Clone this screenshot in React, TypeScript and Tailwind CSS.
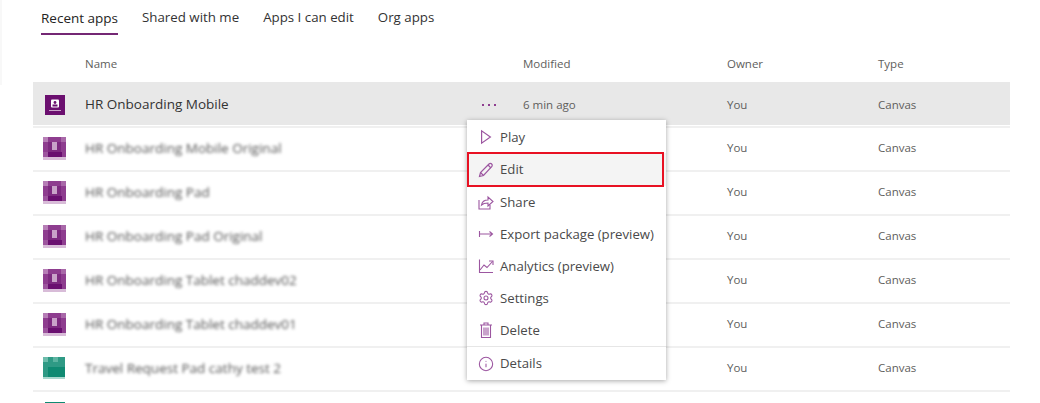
import { Info, Settings } from "lucide-react";
import React from "react";

const font = "font-['Open_Sans','Noto_Sans',sans-serif]";
const iconColor = "#9c56a0";

const tabs = ["Recent apps", "Shared with me", "Apps I can edit", "Org apps"];

const rows = [
  { name: "HR Onboarding Mobile Original", tone: "purple" },
  { name: "HR Onboarding Pad", tone: "purple" },
  { name: "HR Onboarding Pad Original", tone: "purple" },
  { name: "HR Onboarding Tablet chaddev02", tone: "purple" },
  { name: "HR Onboarding Tablet chaddev01", tone: "purple" },
  { name: "Travel Request Pad cathy test 2", tone: "green" },
];

const PurpleBlock = () => (
  <svg width="23" height="23" viewBox="0 0 23 23" shapeRendering="crispEdges" className="shrink-0">
    <rect width="23" height="23" fill="#8e3d8f" />
    <rect width="5" height="5" fill="#b67eb6" />
    <rect x="18" width="5" height="5" fill="#a868a8" />
    <rect y="15" width="5" height="5" fill="#9d559e" />
    <rect x="5" y="5" width="13" height="10" fill="#7d2a80" />
    <rect x="9" y="5" width="5" height="8" fill="#c9a3c9" />
    <rect x="5" y="15" width="14" height="5" fill="#6a0f70" />
    <rect y="20" width="23" height="3" fill="#d8bcd8" />
  </svg>
);

const GreenBlock = () => (
  <svg width="22" height="22" viewBox="0 0 22 22" shapeRendering="crispEdges" className="shrink-0">
    <rect width="22" height="22" fill="#2f9a85" />
    <rect width="5" height="5" fill="#6cbcab" />
    <rect x="10" width="5" height="5" fill="#5cb4a1" />
    <rect x="5" y="10" width="17" height="10" fill="#0f8a72" />
    <rect y="20" width="22" height="2" fill="#a9d8ce" />
  </svg>
);

const PlayIcon = () => (
  <svg width="16" height="16" viewBox="0 0 16 16" fill="none" stroke={iconColor} strokeWidth="1.2">
    <path d="M3.600 1.800v12.400L12.400 8z" />
  </svg>
);

const EditIcon = () => (
  <svg width="16" height="16" viewBox="0 0 16 16" fill="none" stroke={iconColor} strokeWidth="1.2">
    <path d="M1.500 14.500l1-4L11 2c.8-.8 2-.8 2.700 0 .7.700.7 1.900 0 2.600L5.500 13.500z" />
    <path d="M2.500 10.500l3 3M10 3l3 3" />
  </svg>
);

const ShareIcon = () => (
  <svg width="16" height="16" viewBox="0 0 16 16" fill="none" stroke={iconColor} strokeWidth="1.1">
    <path d="M1 6v9h11v-4" />
    <path d="M3.500 11c.5-3 3-5 6.500-5V3l5 4.500-5 4.500V9c-2.500 0-5 .5-6.500 2z" />
  </svg>
);

const ExportIcon = () => (
  <svg width="16" height="16" viewBox="0 0 16 16" fill="none" stroke={iconColor} strokeWidth="1.1">
    <path d="M1.500 5v6M1.500 8h13M11.500 5.500L14.500 8l-3 2.500" />
  </svg>
);

const ChartIcon = () => (
  <svg width="16" height="16" viewBox="0 0 16 16" fill="none" stroke={iconColor} strokeWidth="1.1">
    <path d="M1.500 1.500v13h13.500" />
    <path d="M2 12l4-5 3 2.500L14.500 3.500" />
    <path d="M11 3h4v4" />
  </svg>
);

const SettingsIcon = () => <Settings width={16} height={16} strokeWidth={1.6} color={iconColor} />;

const TrashIcon = () => (
  <svg width="16" height="16" viewBox="0 0 16 16" fill="none" stroke={iconColor} strokeWidth="1.1">
    <path d="M2 3h12M6 3V1h4v2" />
    <path d="M3.500 3v12.500h9V3" />
    <path d="M6 5.500v8M8 5.500v8M10 5.500v8" />
  </svg>
);

const menu = [
  { label: "Play", icon: PlayIcon, h: "h-8" },
  { label: "Edit", icon: EditIcon, h: "h-[33px] bg-[#f4f4f4]" },
  { label: "Share", icon: ShareIcon, h: "h-8" },
  { label: "Export package (preview)", icon: ExportIcon, h: "h-8" },
  { label: "Analytics (preview)", icon: ChartIcon, h: "h-8" },
  { label: "Settings", icon: SettingsIcon, h: "h-8" },
  { label: "Delete", icon: TrashIcon, h: "h-8" },
];

const Row = ({ name, tone }: { name: string; tone: string }) => (
  <div className="h-[44px] flex items-center pb-[2px] border-b-2 border-[#f0f0f0] text-[11.5px] text-[#605e5c]">
    <div className="w-[52px] pl-[10px] flex items-center">
      {tone === "purple" ? <PurpleBlock /> : <GreenBlock />}
    </div>
    <div className="w-[438px] text-[13.5px] text-[#555] blur-[1.4px]">{name}</div>
    <div className="w-[204px]"></div>
    <div className="w-[151px]">You</div>
    <div>Canvas</div>
  </div>
);

export default function App() {
  return (
    <div className={`relative w-[1040px] h-[403px] overflow-hidden bg-white ${font}`}>
      <div className="absolute left-0 top-0 w-[2px] h-[85px] bg-[#f8f8f8]"></div>

      <div className="flex gap-6 pl-[41px] h-[35px] text-[#333] text-[13.3px]">
        {tabs.map((t, i) => (
          <div key={t} className={`h-[35px] pt-[8px] ${i === 0 ? "border-b-2 border-[#742774] font-medium text-[13.5px] text-[#252423]" : ""}`}>
            {t}
          </div>
        ))}
      </div>

      <div className="mx-[33px] w-[977px]">
        <div className="h-[47px] flex items-center text-[11.5px] text-[#605e5c] pt-[10px]">
          <div className="w-[52px]"></div>
          <div className="w-[438px]">Name</div>
          <div className="w-[204px]">Modified</div>
          <div className="w-[151px]">Owner</div>
          <div>Type</div>
        </div>

        <div className="h-[43px] flex items-center bg-[#e8e8e8] text-[11.5px] text-[#605e5c] pt-[2px]">
          <div className="w-[52px] pl-[12px]">
            <svg width="20" height="20" viewBox="0 0 20 20" className="block">
              <rect width="20" height="20" fill="#6b0f6f" />
              <rect x="6" y="4.5" width="8" height="8" rx="1" fill="#fff" />
              <circle cx="10" cy="7.5" r="1.4" fill="#6b0f6f" />
              <rect x="7.5" y="9.5" width="5" height="2" fill="#6b0f6f" />
              <rect x="4" y="15" width="12" height="1" fill="#c9a3c9" />
            </svg>
          </div>
          <div className="w-[380px] text-[13.5px] text-[#333]">HR Onboarding Mobile</div>
          <div className="w-[58px] flex gap-[4px] pl-[17px]">
            <span className="size-[2px] bg-[#8e3d8f]"></span>
            <span className="size-[2px] bg-[#8e3d8f]"></span>
            <span className="size-[2px] bg-[#8e3d8f]"></span>
          </div>
          <div className="w-[204px]">6 min ago</div>
          <div className="w-[151px]">You</div>
          <div>Canvas</div>
        </div>
        <div className="h-[1px]"></div>
        <div className="h-[2px] bg-[#f0f0f0]"></div>

        {rows.map((r) => (
          <Row key={r.name} name={r.name} tone={r.tone} />
        ))}

        <div className="pl-[12px] pt-[10px]">
          <div className="w-[20px] h-[3px] bg-[#0f8a72]"></div>
        </div>
      </div>

      <div className="absolute left-[467px] top-[120px] w-[199px] h-[260px] pt-[1px] bg-white shadow-[0_1px_5px_rgba(0,0,0,0.35)] text-[13.2px] text-[#4a4a4a]">
        {menu.map((m) => (
          <div key={m.label} className={`${m.h} flex items-center pl-[11px] gap-[6px]`}>
            <m.icon />
            <span className="pt-[1px]">{m.label}</span>
          </div>
        ))}
        <div className="border-t border-[#e6e6e6] h-[34px] flex items-center pl-[11px] gap-[6px]">
          <Info width={16} height={16} strokeWidth={1.6} color={iconColor} />
          <span className="pt-[1px]">Details</span>
        </div>
        <div className="absolute left-0 top-[32px] w-[197px] h-[35px] border-2 border-[#e81123]"></div>
      </div>
    </div>
  );
}
